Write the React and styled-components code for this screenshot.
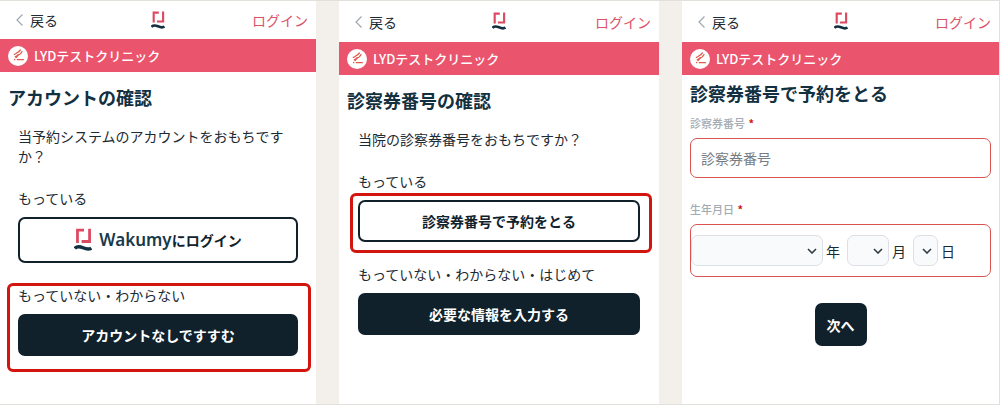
import React from "react";
import styled, { createGlobalStyle, css } from "styled-components";

const GlobalStyle = createGlobalStyle`
  * {
    box-sizing: border-box;
  }

  body {
    margin: 0;
    background-color: #f3efea;
    color: #1c2a33;
    font-family: "Noto Sans CJK JP", "Noto Sans", sans-serif;
    font-size: 14px;
    line-height: 20px;
  }

  button,
  input,
  select {
    font: inherit;
  }
`;

const WakumyMark = ({ size }) => (
  <Mark $size={size} viewBox="0 0 52 68" aria-hidden="true">
    <g fill="none" stroke="#dc4a62" strokeWidth="8">
      <path d="M10 43V6H29" />
      <path d="M45 2V39H22" />
    </g>
    <path
      d="M2 59C9 51 17 53 26 57C35 61 43 63 50 58"
      fill="none"
      stroke="#12303f"
      strokeWidth="10"
    />
  </Mark>
);

const ClinicMark = () => (
  <ClinicBadge viewBox="0 0 60 60" aria-hidden="true">
    <circle cx="30" cy="30" r="30" fill="#fff" />
    <g fill="none" stroke="#e2584a" strokeWidth="4" strokeLinecap="round">
      <path d="M19 25C23 26 25 20 29 19S34 16 37 12" />
      <path d="M22 32C27 32 28 27 33 26S38 22 42 17" />
      <path d="M30 27L24 35" />
      <path d="M28 41H46" />
      <path d="M20 40V41" />
    </g>
  </ClinicBadge>
);

const Chevron = () => (
  <BackIcon viewBox="0 0 7 12" aria-hidden="true">
    <path d="M6.5 0.5L1 6L6.5 11.5" fill="none" stroke="#a0a8ac" strokeWidth="1.2" />
  </BackIcon>
);

//Header and clinic bar shared by every screen
const Screen = ({ compact, children }) => (
  <Panel>
    <Header $compact={compact}>
      <BackButton type="button">
        <Chevron />
        戻る
      </BackButton>
      <WakumyMark size={14} />
      <LoginLink href="#login">ログイン</LoginLink>
    </Header>
    <ClinicBar>
      <ClinicMark />
      LYDテストクリニック
    </ClinicBar>
    {children}
  </Panel>
);

const App = () => {
  return (
    <>
      <GlobalStyle />
      <Page>
        {/* Account check */}
        <Screen compact>
          <Title>アカウントの確認</Title>
          <Content>
            <p>当予約システムのアカウントをおもちですか？</p>
            <Choice>
              <p>もっている</p>
              <ActionButton type="button" $outlined $tall>
                <WakumyMark size={18} />
                <Wordmark>Wakumy</Wordmark>
                にログイン
              </ActionButton>
            </Choice>
            <Choice $highlight="group">
              <p>もっていない・わからない</p>
              <ActionButton type="button">アカウントなしですすむ</ActionButton>
            </Choice>
          </Content>
        </Screen>

        {/* Patient number check */}
        <Screen>
          <Title>診察券番号の確認</Title>
          <Content $wide>
            <p>当院の診察券番号をおもちですか？</p>
            <Choice $highlight="button">
              <p>もっている</p>
              <ActionButton type="button" $outlined>
                診察券番号で予約をとる
              </ActionButton>
            </Choice>
            <Choice>
              <p>もっていない・わからない・はじめて</p>
              <ActionButton type="button">必要な情報を入力する</ActionButton>
            </Choice>
          </Content>
        </Screen>

        {/* Booking form */}
        <Screen>
          <Title $tight>診察券番号で予約をとる</Title>
          <Form>
            <FieldLabel htmlFor="patient-number">
              診察券番号 <Required>*</Required>
            </FieldLabel>
            <TextInput id="patient-number" placeholder="診察券番号" />
            <FieldLabel as="span" id="birthday-label" $spaced>
              生年月日 <Required>*</Required>
            </FieldLabel>
            <DateGroup role="group" aria-labelledby="birthday-label">
              <DatePart>
                <DateSelect $width={132} defaultValue="">
                  <option value="" />
                </DateSelect>
                年
              </DatePart>
              <DatePart>
                <DateSelect $width={42} defaultValue="">
                  <option value="" />
                </DateSelect>
                月
              </DatePart>
              <DatePart>
                <DateSelect $width={25} defaultValue="">
                  <option value="" />
                </DateSelect>
                日
              </DatePart>
            </DateGroup>
            <NextButton type="button">次へ</NextButton>
          </Form>
        </Screen>
      </Page>
    </>
  );
};

const Page = styled.main`
  display: grid;
  grid-template-columns: 316fr 320fr 317fr;
  column-gap: 23px;
  min-height: 100vh;
  border: 1px solid #e3dfdb;
  border-left: none;
`;

const Panel = styled.section`
  min-width: 0;
  background-color: #fff;

  p {
    margin: 0;
  }
`;

const Header = styled.header`
  display: grid;
  grid-template-columns: 1fr auto 1fr;
  align-items: center;
  height: ${(props) => (props.$compact ? "38px" : "41px")};
  padding: 0 8px;
`;

const BackButton = styled.button`
  display: flex;
  align-items: center;
  justify-self: start;
  gap: 7px;
  padding: 0 0 0 8px;
  border: none;
  background: none;
  color: #1c2a33;
  cursor: pointer;
`;

const BackIcon = styled.svg`
  width: 7px;
  height: 12px;
`;

const Mark = styled.svg`
  width: ${(props) => props.$size}px;
  aspect-ratio: 52 / 68;
`;

const LoginLink = styled.a`
  justify-self: end;
  color: #dc5268;
  text-decoration: none;
`;

const ClinicBar = styled.div`
  display: flex;
  align-items: center;
  gap: 6px;
  height: 33px;
  padding: 0 8px;
  background-color: #ea546d;
  color: #fff;
  font-size: 13px;
  font-weight: 500;
`;

const ClinicBadge = styled.svg`
  width: 20px;
  height: 20px;
`;

const Title = styled.h1`
  margin: 0;
  padding: ${(props) => (props.$tight ? "6px" : "13px")} 8px 0;
  color: #12303f;
  font-size: 18px;
  font-weight: 700;
  line-height: 24px;
`;

const Content = styled.div`
  padding: 17px ${(props) => (props.$wide ? "19px" : "18px")} 0;
`;

const marker = css`
  position: absolute;
  border: 3px solid #d3150f;
  border-radius: 6px;
  pointer-events: none;
  content: "";
`;

/* The red marker is drawn over the choice, or only around its button */
const Choice = styled.div`
  position: relative;
  display: flex;
  flex-direction: column;
  gap: 9px;
  margin-top: 22px;

  &::after {
    ${(props) => props.$highlight && marker}
    inset: ${(props) =>
      props.$highlight === "group" ? "-2px -13px -16px -11px" : "22px -12px -11px -8px"};
  }
`;

const ActionButton = styled.button`
  display: flex;
  align-items: center;
  justify-content: center;
  height: ${(props) => (props.$tall ? "46px" : "42px")};
  border: 2px solid #10212b;
  border-radius: 7px;
  background-color: ${(props) => (props.$outlined ? "#fff" : "#10212b")};
  color: ${(props) => (props.$outlined ? "#10212b" : "#fff")};
  font-weight: 700;
  cursor: pointer;
`;

const Wordmark = styled.span`
  margin-left: 7px;
  color: #17394a;
  font-family: "Noto Sans", sans-serif;
  font-size: 17px;
  font-weight: 600;
`;

const Form = styled.form`
  display: flex;
  flex-direction: column;
  padding: 10px 8px 0;
`;

const FieldLabel = styled.label`
  margin-top: ${(props) => (props.$spaced ? "23px" : "0")};
  margin-bottom: 7px;
  color: #a3abb3;
  font-size: 11px;
  font-weight: 500;
  line-height: 16px;
`;

const Required = styled.span`
  margin-left: 1px;
  color: #d3150f;
  font-weight: 700;
`;

const TextInput = styled.input`
  width: 100%;
  height: 40px;
  padding: 0 10px;
  border: 1px solid #d9534f;
  border-radius: 7px;
  color: #1c2a33;

  &::placeholder {
    color: #757d83;
  }
`;

const DateGroup = styled.div`
  display: flex;
  align-items: center;
  gap: 7px;
  height: 53px;
  border: 1px solid #d9534f;
  border-radius: 7px;
`;

const DatePart = styled.label`
  display: flex;
  align-items: center;
  gap: 3px;
`;

const DateSelect = styled.select`
  width: ${(props) => props.$width}px;
  height: 31px;
  padding: 0;
  border: 1px solid #dcdfe4;
  border-radius: 7px;
  appearance: none;
  background: #f9fafb
    url("data:image/svg+xml,%3Csvg xmlns='http://www.w3.org/2000/svg' viewBox='0 0 10 6'%3E%3Cpath d='M1 1l4 4 4-4' fill='none' stroke='%23333b42' stroke-width='1.6'/%3E%3C/svg%3E")
    no-repeat right 5px center / 10px 6px;
`;

const NextButton = styled(ActionButton)`
  align-self: center;
  height: 43px;
  margin-top: 26px;
  padding: 0 10px;
`;

export default App;
